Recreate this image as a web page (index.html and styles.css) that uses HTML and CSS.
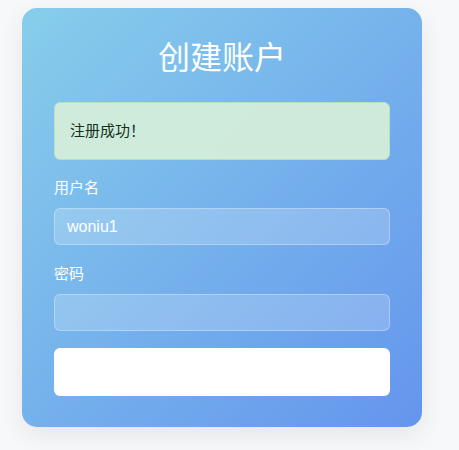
FILE: index.html
```
<!DOCTYPE html>
<html lang="zh-CN">
<head>
    <meta charset="UTF-8">
    <meta name="viewport" content="width=device-width, initial-scale=1.0">
    <title>创建账户</title>
    <link rel="stylesheet" href="styles.css">
</head>
<body>
    <main class="card">
        <h2 class="title">创建账户</h2>
        <div class="alert">注册成功！</div>
        <form class="form">
            <div class="form-group">
                <label for="username">用户名</label>
                <input type="text" id="username" class="field" value="woniu1">
            </div>
            <div class="form-group">
                <label for="password">密码</label>
                <input type="password" id="password" class="field">
            </div>
            <button type="button" class="btn">注册</button>
        </form>
    </main>
</body>
</html>
```

FILE: styles.css
```
/* Global */
body {
    margin: 0;
    padding: 8px 0 0 22px;
    background-color: #f7f8fa;
    font-family: 'Liberation Sans', 'Noto Sans CJK SC', sans-serif;
    min-height: 100vh;
    box-sizing: border-box;
}

/* Card */
.card {
    width: 400px;
    box-sizing: border-box;
    padding: 32px 32px 31px;
    border-radius: 15px;
    background: linear-gradient(135deg, #87ceeb 0%, #6495ed 100%);
    box-shadow: 0 8px 24px rgba(0, 0, 0, 0.08);
    color: white;
}

.title {
    margin: 0 0 26px;
    font-size: 32px;
    line-height: 36px;
    font-weight: 400;
    text-align: center;
}

.alert {
    padding: 16px 15px;
    line-height: 24px;
    font-size: 15px;
    color: #14301c;
    background-color: rgba(212, 237, 218, 0.95);
    border: 1px solid #b9e0c4;
    border-radius: 6px;
    margin-bottom: 17px;
}

.form-group {
    margin-bottom: 18px;
}

label {
    display: block;
    font-size: 15px;
    line-height: 22px;
    margin-bottom: 9px;
}

.field {
    display: block;
    width: 100%;
    height: 37px;
    box-sizing: border-box;
    padding: 0 12px;
    font-size: 16px;
    font-family: inherit;
    color: white;
    background-color: rgba(255, 255, 255, 0.2);
    border: 1px solid rgba(255, 255, 255, 0.3);
    border-radius: 6px;
    outline: none;
}

.btn {
    display: block;
    width: 100%;
    height: 48px;
    margin-top: -1px;
    border: none;
    border-radius: 6px;
    background-color: white;
    color: white;
    font-size: 16px;
    font-family: inherit;
    cursor: pointer;
}
```
